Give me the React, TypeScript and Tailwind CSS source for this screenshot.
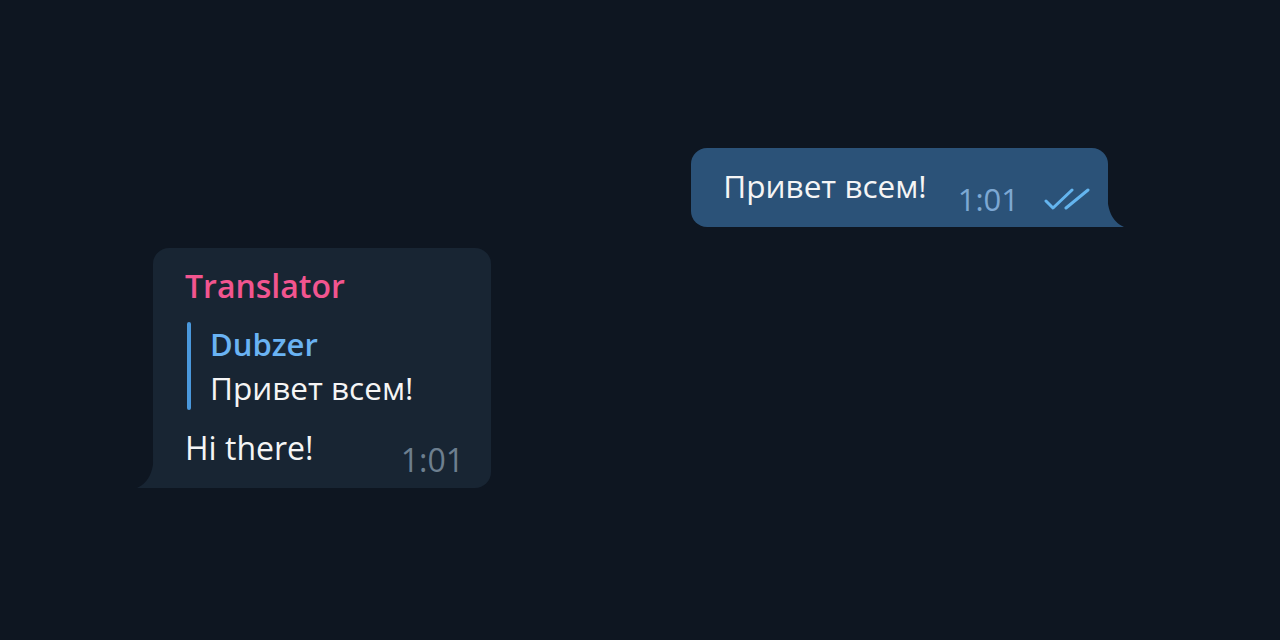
import React from 'react'

const font = { fontFamily: '"Open Sans", "Noto Sans", sans-serif' }

function DoubleCheck() {
  return (
    <svg width="48" height="24" viewBox="0 0 48 24" fill="none" className="text-[#64b5ef]">
      <path d="M2 13 L9 20 L28 2" stroke="currentColor" strokeWidth="3" strokeLinecap="round" strokeLinejoin="round" />
      <path d="M22 20 L44 2" stroke="currentColor" strokeWidth="3" strokeLinecap="round" />
    </svg>
  )
}

function TailRight({ color }: { color: string }) {
  return (
    <svg width="17" height="38" viewBox="0 0 17 38" className="absolute -right-[16px] bottom-0">
      <path d="M0 0 C0 20 4 32 17 38 L0 38 Z" fill={color} />
    </svg>
  )
}

function TailLeft({ color }: { color: string }) {
  return (
    <svg width="17" height="38" viewBox="0 0 17 38" className="absolute -left-[16px] bottom-0">
      <path d="M17 0 C17 20 13 32 0 38 L17 38 Z" fill={color} />
    </svg>
  )
}

function OutgoingMessage() {
  return (
    <div className="flex justify-end">
      <div className="relative flex items-start rounded-[16px] rounded-br-none bg-[#2b5278] pl-8 pr-[16px] pt-[17px] pb-[7px]">
        <span className="text-[31.5px] leading-[42px] text-[#f5f5f5]">Привет всем!</span>
        <span className="ml-[31px] mt-[13px] text-[31px] leading-[42px] text-[#7da8d3]">1:01</span>
        <span className="ml-[25px] mt-[23px]">
          <DoubleCheck />
        </span>
        <TailRight color="#2b5278" />
      </div>
    </div>
  )
}

function IncomingMessage() {
  return (
    <div className="flex justify-start">
      <div className="relative w-[338px] rounded-[16px] rounded-bl-none bg-[#182533] pl-8 pr-[27px] pt-4 pb-[6px]">
        <div className="text-[32px] font-semibold leading-[44px] text-[#f2558f]">Translator</div>
        <div className="mt-[14px] ml-[2px] flex gap-[19px]">
          <div className="w-1 rounded-sm bg-[#4a98dc]" />
          <div>
            <div className="text-[31px] font-semibold leading-[44px] text-[#6ab3f3]">Dubzer</div>
            <div className="text-[31.5px] leading-[44px] text-[#f5f5f5]">Привет всем!</div>
          </div>
        </div>
        <div className="mt-4 flex items-start justify-between">
          <span className="text-[32px] leading-[44px] text-[#f5f5f5]">Hi there!</span>
          <span className="mt-3 text-[32px] leading-[44px] text-[#6d7f8f]">1:01</span>
        </div>
        <TailLeft color="#182533" />
      </div>
    </div>
  )
}

export default function App() {
  return (
    <div className="h-[640px] w-full bg-[#0e1621] pt-[148px] pl-[153px] pr-[172px]" style={font}>
      <div className="flex flex-col gap-[21px]">
        <OutgoingMessage />
        <IncomingMessage />
      </div>
    </div>
  )
}
